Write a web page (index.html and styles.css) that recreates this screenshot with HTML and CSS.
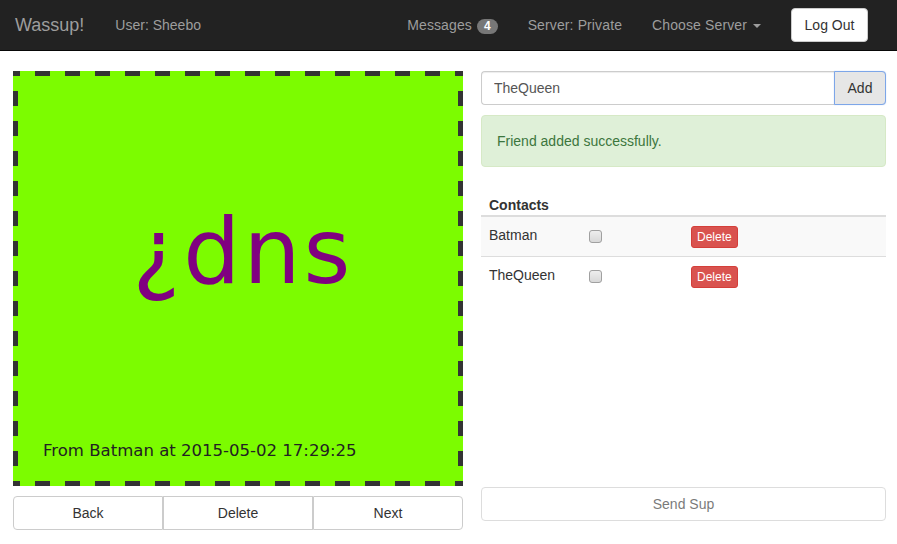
FILE: index.html
```html
<!DOCTYPE html>
<html>
<head>
<meta charset="utf-8">
<title>Wassup!</title>
<link rel="stylesheet" href="styles.css">
</head>
<body>
<nav class="navbar">
  <a class="brand">Wassup!</a>
  <span class="navbar-text">User: Sheebo</span>
  <ul class="nav">
    <li><a>Messages <span class="badge">4</span></a></li>
    <li><a>Server: Private</a></li>
    <li><a>Choose Server <span class="caret"></span></a></li>
  </ul>
  <button class="btn logout">Log Out</button>
</nav>
<main class="page">
  <section class="left">
    <div class="sup-canvas">
      <div class="sup-text">¿dns</div>
      <div class="sup-caption">From Batman at 2015-05-02 17:29:25</div>
    </div>
    <div class="btn-group">
      <button class="btn">Back</button>
      <button class="btn">Delete</button>
      <button class="btn">Next</button>
    </div>
  </section>
  <section class="right">
    <div class="input-group">
      <input class="form-control" type="text" value="TheQueen">
      <button class="btn add">Add</button>
    </div>
    <div class="alert">Friend added successfully.</div>
    <div class="contacts">
      <table class="table">
        <thead>
          <tr><th class="c1">Contacts</th><th class="c2"></th><th class="c3"></th></tr>
        </thead>
        <tbody>
          <tr class="odd"><td>Batman</td><td><input type="checkbox" class="chk"></td><td><button class="btn-xs">Delete</button></td></tr>
          <tr><td>TheQueen</td><td><input type="checkbox" class="chk"></td><td><button class="btn-xs">Delete</button></td></tr>
        </tbody>
      </table>
    </div>
    <button class="btn send" disabled>Send Sup</button>
  </section>
</main>
</body>
</html>
```
FILE: styles.css
```css
* { box-sizing: border-box; }
html, body { margin: 0; padding: 0; }
body {
  font-family: "Liberation Sans", Arial, sans-serif;
  font-size: 14px;
  line-height: 20px;
  color: #333;
  background: #fff;
}
.navbar {
  display: flex;
  align-items: center;
  height: 51px;
  background: #222;
  border-bottom: 1px solid #080808;
  padding: 0 29px 0 0;
}
.brand {
  font-size: 18px;
  line-height: 20px;
  padding: 15px;
  color: #9d9d9d;
}
.navbar-text {
  color: #9d9d9d;
  margin-left: 16px;
  padding: 15px 0;
}
.nav {
  list-style: none;
  margin: 0 0 0 auto;
  padding: 0;
  display: flex;
}
.nav a {
  display: block;
  padding: 15px;
  color: #9d9d9d;
  letter-spacing: 0.12px;
}
.badge {
  display: inline-block;
  height: 15px;
  line-height: 15px;
  padding: 0 7px;
  border-radius: 8px;
  background: #777;
  color: #fff;
  font-size: 12px;
  font-weight: bold;
  vertical-align: 0;
  margin-left: 1px;
  letter-spacing: 0;
}
.caret {
  display: inline-block;
  width: 0;
  height: 0;
  margin-left: 2px;
  vertical-align: middle;
  border-top: 4px solid #9d9d9d;
  border-left: 4px solid transparent;
  border-right: 4px solid transparent;
}
.btn {
  font-family: inherit;
  font-size: 14px;
  line-height: 20px;
  padding: 6px 12px;
  height: 34px;
  color: #333;
  background: #fff;
  border: 1px solid #ccc;
  border-radius: 4px;
  cursor: pointer;
}
.logout {
  margin-left: 15px;
  width: 77px;
  padding: 6px 0;
}
.page {
  display: flex;
  gap: 18px;
  padding: 20px 11px 0 13px;
}
.left {
  width: 450px;
  flex: none;
}
.sup-canvas {
  height: 415px;
  padding: 5px;
  background-color: #7cfc00;
  background-image:
    linear-gradient(90deg, #333 15px, transparent 15px),
    linear-gradient(90deg, #333 15px, transparent 15px),
    linear-gradient(180deg, #333 15px, transparent 15px),
    linear-gradient(180deg, #333 15px, transparent 15px);
  background-size: 30px 5px, 30px 5px, 5px 30px, 5px 30px;
  background-repeat: repeat-x, repeat-x, repeat-y, repeat-y;
  background-position: -8px 0, -8px 100%, 0 -10px, 100% -10px;
  display: flex;
  flex-direction: column;
}
.sup-text {
  font-family: "DejaVu Sans", sans-serif;
  font-size: 90px;
  line-height: 1;
  letter-spacing: 3px;
  color: #800080;
  text-align: center;
  margin-top: 131px;
  padding-left: 10px;
}
.sup-caption {
  font-family: "DejaVu Sans", sans-serif;
  font-size: 16.55px;
  line-height: 20px;
  color: #222;
  margin-top: auto;
  padding: 0 0 20px 25px;
}
.btn-group {
  display: flex;
  margin-top: 10px;
}
.btn-group .btn {
  flex: 1;
  border-radius: 0;
}
.btn-group .btn:first-child { border-radius: 4px 0 0 4px; }
.btn-group .btn:last-child { border-radius: 0 4px 4px 0; }
.right {
  flex: 1;
  display: flex;
  flex-direction: column;
}
.input-group {
  display: flex;
  height: 34px;
}
.form-control {
  flex: 1;
  min-width: 0;
  height: 34px;
  padding: 6px 12px;
  font-family: inherit;
  font-size: 14px;
  color: #555;
  border: 1px solid #ccc;
  border-right: 0;
  border-radius: 4px 0 0 4px;
  box-shadow: inset 0 1px 1px rgba(0,0,0,.075);
  outline: none;
}
.add {
  width: 52px;
  padding: 6px 0;
  background: #e6e6e6;
  border-color: #7da6e8;
  border-radius: 0 4px 4px 0;
  box-shadow: 0 0 1px rgba(102,150,230,.6);
}
.alert {
  margin-top: 10px;
  padding: 15px;
  background: #dff0d8;
  border: 1px solid #d6e9c6;
  border-radius: 4px;
  color: #3c763d;
}
.contacts {
  margin-top: 20px;
  height: 300px;
}
.table {
  width: 100%;
  border-collapse: collapse;
  border-spacing: 0;
}
.table th {
  text-align: left;
  font-weight: bold;
  padding: 8px 8px 0;
  border-bottom: 2px solid #ddd;
  vertical-align: bottom;
}
.c1 { width: 101px; }
.c2 { width: 101px; }
.table td {
  padding: 8px;
  vertical-align: top;
  line-height: 20px;
}
.table tbody tr + tr td { border-top: 1px solid #ddd; }
.table tr.odd td { background: #f9f9f9; }
.chk {
  -webkit-appearance: none;
  appearance: none;
  display: block;
  width: 13px;
  height: 13px;
  margin: 5px 0 0 -1px;
  border: 1px solid #a0a0a0;
  border-radius: 3px;
  background: linear-gradient(#eee, #d8d8d8);
}
.btn-xs {
  display: block;
  height: 22px;
  padding: 1px 5px;
  font-family: inherit;
  font-size: 12px;
  line-height: 18px;
  color: #fff;
  background: #d9534f;
  border: 1px solid #d43f3a;
  border-radius: 3px;
  margin-top: 1px;
}
.send {
  width: 100%;
  opacity: .65;
  cursor: not-allowed;
}
```
